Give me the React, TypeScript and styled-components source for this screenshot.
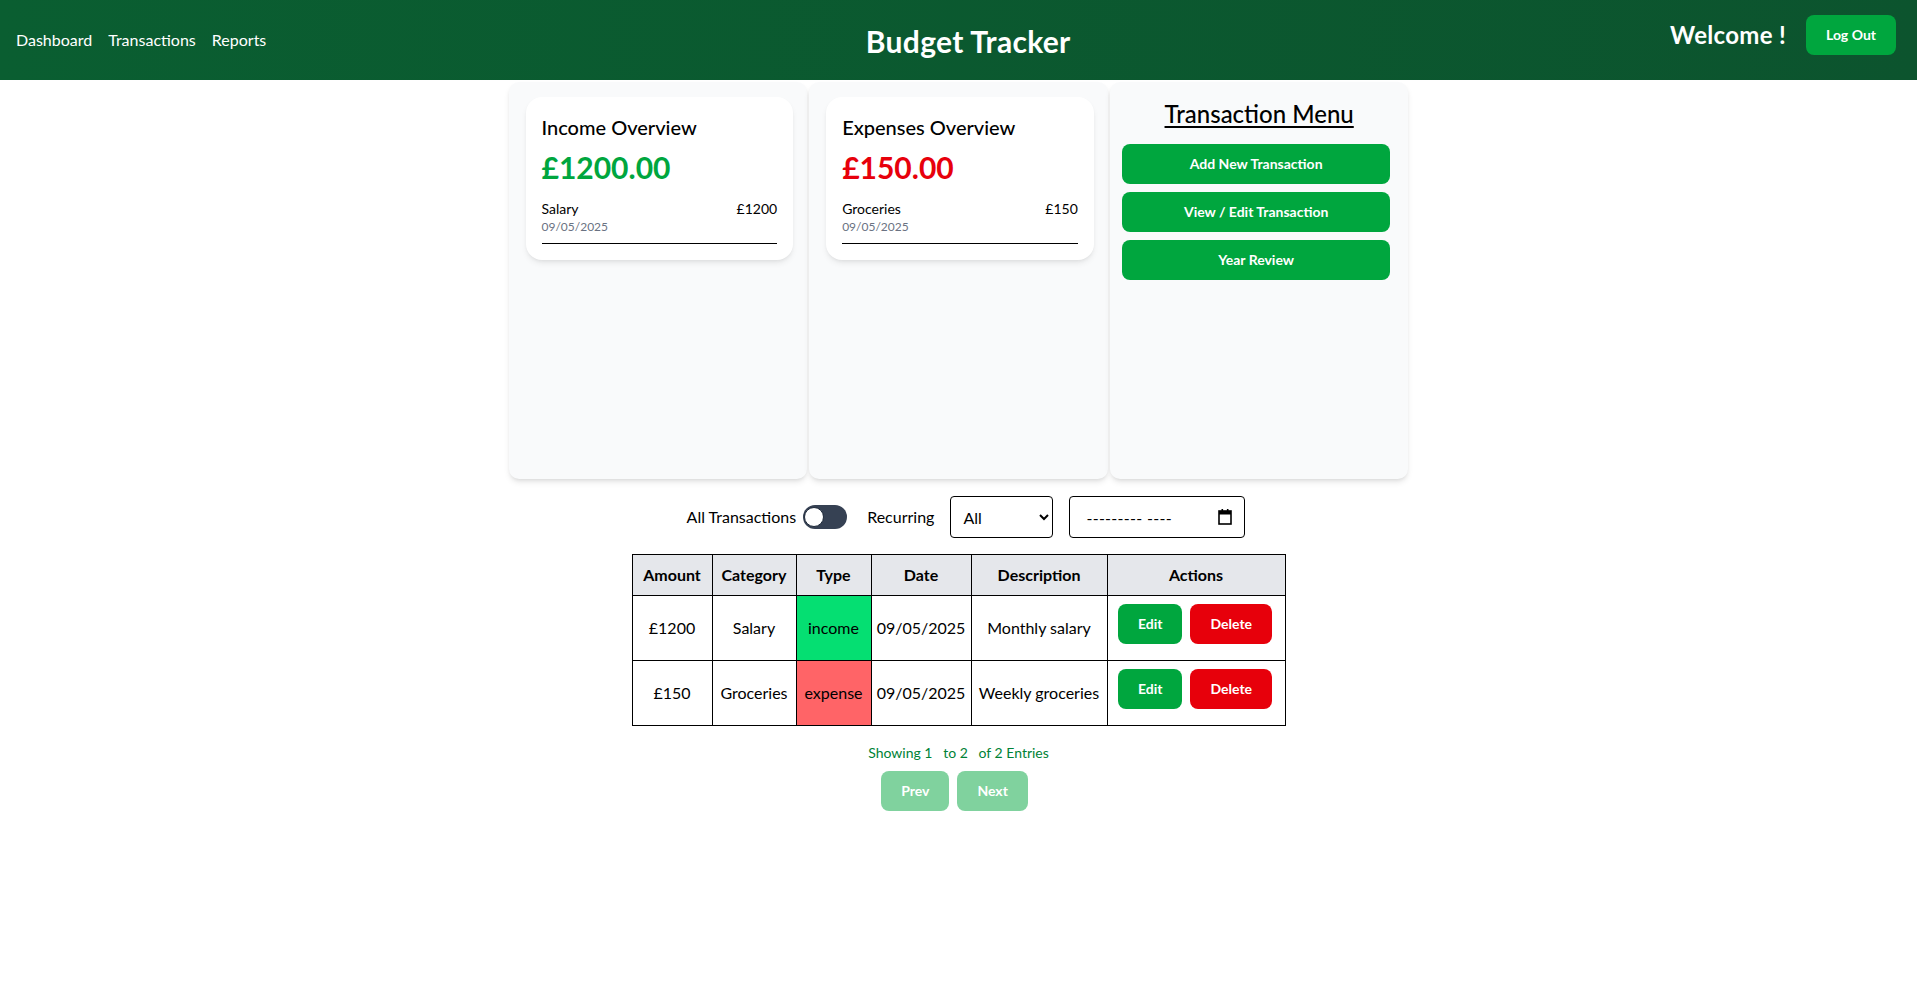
import React from "react";
import styled, { createGlobalStyle } from "styled-components";

const GlobalStyle = createGlobalStyle`
  * { box-sizing: border-box; }
  body {
    margin: 0;
    background: #ffffff;
    font-family: "Segoe UI", Lato, "Noto Sans", sans-serif;
    color: #000;
  }
`;

const Header = styled.header`
  height: 80px;
  display: flex;
  align-items: center;
  justify-content: space-between;
  padding: 0 21px 0 16px;
  background: linear-gradient(to right, #0a5e31, #0c542e);
  color: #fff;
`;

const Nav = styled.nav`
  display: flex;
  gap: 16px;
`;

const NavLink = styled.a`
  color: #fff;
  font-size: 16px;
  line-height: 24px;
  text-decoration: none;
`;

const Title = styled.h1`
  margin: 0;
  font-size: 30px;
  line-height: 36px;
  font-weight: 700;
  letter-spacing: 0.3px;
  padding-top: 2px;
`;

const UserArea = styled.div`
  display: flex;
  align-items: center;
  gap: 20px;
  padding-bottom: 10px;
`;

const Welcome = styled.span`
  font-size: 24px;
  line-height: 32px;
  font-weight: 700;
  letter-spacing: 0.3px;
`;

const Button = styled.button<{ $tone?: "green" | "red" | "faded" }>`
  border: none;
  border-radius: 8px;
  padding: 10px 20px;
  font-family: inherit;
  font-size: 14px;
  line-height: 20px;
  font-weight: 700;
  color: #fff;
  cursor: pointer;
  background: ${(p) =>
    p.$tone === "red" ? "#e7000b" : p.$tone === "faded" ? "#80d29e" : "#00a63e"};
`;

const Main = styled.main`
  width: 900px;
  margin: 2px auto 0;
`;

const Overview = styled.section`
  display: grid;
  grid-template-columns: repeat(3, 1fr);
  gap: 2px;
  height: 397px;
`;

const Column = styled.div<{ $menu?: boolean }>`
  background: #f9fafb;
  border-radius: 10px;
  box-shadow: 0 4px 6px -1px rgba(0, 0, 0, 0.1), 0 2px 4px -2px rgba(0, 0, 0, 0.1);
  padding: ${(p) => (p.$menu ? "16px 12px" : "15px 14px 16px 17px")};
  display: flex;
  flex-direction: column;
`;

const Card = styled.div`
  background: #fff;
  border-radius: 16px;
  padding: 16px;
  box-shadow: 0 4px 6px -1px rgba(0, 0, 0, 0.08), 0 2px 4px -2px rgba(0, 0, 0, 0.08);
`;

const CardTitle = styled.h2`
  margin: 0;
  font-size: 20px;
  line-height: 28px;
  font-weight: 500;
`;

const Amount = styled.div<{ $negative?: boolean }>`
  margin-top: 8px;
  font-size: 30px;
  line-height: 36px;
  font-weight: 700;
  color: ${(p) => (p.$negative ? "#e7000b" : "#00a63e")};
`;

const Entry = styled.div`
  margin-top: 14px;
  padding-bottom: 8px;
  border-bottom: 1px solid #000;
`;

const EntryRow = styled.div`
  display: flex;
  justify-content: space-between;
  font-size: 14px;
  line-height: 20px;
`;

const EntryDate = styled.div`
  font-size: 12px;
  line-height: 16px;
  color: #6a7282;
`;

const MenuTitle = styled.h2`
  margin: 0 0 14px;
  text-align: center;
  font-size: 24px;
  line-height: 32px;
  font-weight: 500;
  text-decoration: underline;
  text-underline-offset: 3px;
  text-decoration-thickness: 2px;
`;

const MenuList = styled.div`
  display: flex;
  flex-direction: column;
  gap: 8px;
  width: calc(100% - 6px);
`;

const MenuButton = styled(Button)`
  width: 100%;
`;

const Filters = styled.div`
  display: flex;
  align-items: center;
  justify-content: center;
  margin: 17px 0 0 15px;
  height: 42px;
  font-size: 16px;
`;

const FilterLabel = styled.span<{ $gap: number }>`
  margin-right: ${(p) => p.$gap}px;
  line-height: 24px;
`;

const Toggle = styled.span`
  position: relative;
  display: inline-block;
  width: 44px;
  height: 24px;
  border-radius: 12px;
  background: #364153;
  margin-right: 20px;
`;

const Knob = styled.span`
  position: absolute;
  left: 1px;
  top: 2px;
  width: 20px;
  height: 20px;
  border-radius: 50%;
  background: #fff;
  border: 1px solid #1e2939;
`;

const Select = styled.select`
  width: 103px;
  height: 42px;
  border: 1px solid #000;
  border-radius: 4px;
  padding: 0 8px;
  font-family: inherit;
  font-size: 16px;
  background: #fff;
  color: #000;
  margin-right: 16px;
`;

const DateField = styled.label`
  width: 176px;
  height: 42px;
  border: 1px solid #000;
  border-radius: 4px;
  padding: 0 12px 0 16px;
  display: flex;
  align-items: center;
  justify-content: space-between;
  font-size: 16px;
  background: #fff;
  color: #000;
`;

const DatePlaceholder = styled.span`
  white-space: pre;
  letter-spacing: 0.3px;
`;

const CalendarIcon = () => (
  <svg width="14" height="16" viewBox="0 0 14 16" aria-hidden="true">
    <rect x="1" y="2" width="12" height="13" fill="none" stroke="#000" strokeWidth="1.6" />
    <rect x="1" y="2" width="12" height="3.5" fill="#000" />
    <rect x="3.5" y="0" width="1.6" height="3" fill="#000" />
    <rect x="8.9" y="0" width="1.6" height="3" fill="#000" />
  </svg>
);

const Table = styled.table`
  margin: 16px auto 0;
  border-collapse: collapse;
  table-layout: fixed;
  width: 653px;
  font-size: 16px;
`;

const Th = styled.th`
  border: 1px solid #000;
  background: #e5e7eb;
  padding: 8px;
  line-height: 24px;
  font-weight: 700;
  text-align: center;
`;

const Td = styled.td<{ $type?: "income" | "expense" }>`
  border: 1px solid #000;
  padding: 8px 4px;
  line-height: 24px;
  text-align: center;
  vertical-align: middle;
  white-space: nowrap;
  background: ${(p) =>
    p.$type === "income" ? "#05df72" : p.$type === "expense" ? "#ff6467" : "transparent"};
`;

const ActionsCell = styled.td`
  border: 1px solid #000;
  padding: 8px 8px 16px 0;
`;

const Actions = styled.div`
  display: flex;
  justify-content: center;
  gap: 8px;
  padding-left: 6px;
`;

const Pagination = styled.div`
  margin-top: 17px;
  display: flex;
  flex-direction: column;
  align-items: center;
  gap: 8px;
`;

const Showing = styled.div`
  font-size: 14px;
  line-height: 20px;
  color: #008236;
  white-space: pre;
`;

const PageButtons = styled.div`
  display: flex;
  gap: 8px;
  margin-right: 8px;
`;

const rows = [
  { amount: "£1200", category: "Salary", type: "income" as const, date: "09/05/2025", desc: "Monthly salary" },
  { amount: "£150", category: "Groceries", type: "expense" as const, date: "09/05/2025", desc: "Weekly groceries" },
];

const widths = [80, 84, 75, 100, 136, 178];

export default function App() {
  return (
    <>
      <GlobalStyle />
      <Header>
        <Nav>
          <NavLink href="#">Dashboard</NavLink>
          <NavLink href="#">Transactions</NavLink>
          <NavLink href="#">Reports</NavLink>
        </Nav>
        <Title>Budget Tracker</Title>
        <UserArea>
          <Welcome>Welcome !</Welcome>
          <Button>Log Out</Button>
        </UserArea>
      </Header>
      <Main>
        <Overview>
          <Column>
            <Card>
              <CardTitle>Income Overview</CardTitle>
              <Amount>£1200.00</Amount>
              <Entry>
                <EntryRow>
                  <span>Salary</span>
                  <span>£1200</span>
                </EntryRow>
                <EntryDate>09/05/2025</EntryDate>
              </Entry>
            </Card>
          </Column>
          <Column>
            <Card>
              <CardTitle>Expenses Overview</CardTitle>
              <Amount $negative>£150.00</Amount>
              <Entry>
                <EntryRow>
                  <span>Groceries</span>
                  <span>£150</span>
                </EntryRow>
                <EntryDate>09/05/2025</EntryDate>
              </Entry>
            </Card>
          </Column>
          <Column $menu>
            <MenuTitle>Transaction Menu</MenuTitle>
            <MenuList>
              <MenuButton>Add New Transaction</MenuButton>
              <MenuButton>View / Edit Transaction</MenuButton>
              <MenuButton>Year Review</MenuButton>
            </MenuList>
          </Column>
        </Overview>
      </Main>
      <Filters>
        <FilterLabel $gap={7}>All Transactions</FilterLabel>
        <Toggle>
          <Knob />
        </Toggle>
        <FilterLabel $gap={16}>Recurring</FilterLabel>
        <Select defaultValue="All">
          <option>All</option>
          <option>Yes</option>
          <option>No</option>
        </Select>
        <DateField>
          <DatePlaceholder>{"--------- ----"}</DatePlaceholder>
          <CalendarIcon />
        </DateField>
      </Filters>
      <Table>
        <colgroup>
          {widths.map((w, i) => (
            <col key={i} style={{ width: w }} />
          ))}
        </colgroup>
        <thead>
          <tr>
            <Th>Amount</Th>
            <Th>Category</Th>
            <Th>Type</Th>
            <Th>Date</Th>
            <Th>Description</Th>
            <Th>Actions</Th>
          </tr>
        </thead>
        <tbody>
          {rows.map((r) => (
            <tr key={r.category}>
              <Td>{r.amount}</Td>
              <Td>{r.category}</Td>
              <Td $type={r.type}>{r.type}</Td>
              <Td>{r.date}</Td>
              <Td>{r.desc}</Td>
              <ActionsCell>
                <Actions>
                  <Button>Edit</Button>
                  <Button $tone="red">Delete</Button>
                </Actions>
              </ActionsCell>
            </tr>
          ))}
        </tbody>
      </Table>
      <Pagination>
        <Showing>{"Showing 1   to 2   of 2 Entries"}</Showing>
        <PageButtons>
          <Button $tone="faded">Prev</Button>
          <Button $tone="faded">Next</Button>
        </PageButtons>
      </Pagination>
    </>
  );
}
